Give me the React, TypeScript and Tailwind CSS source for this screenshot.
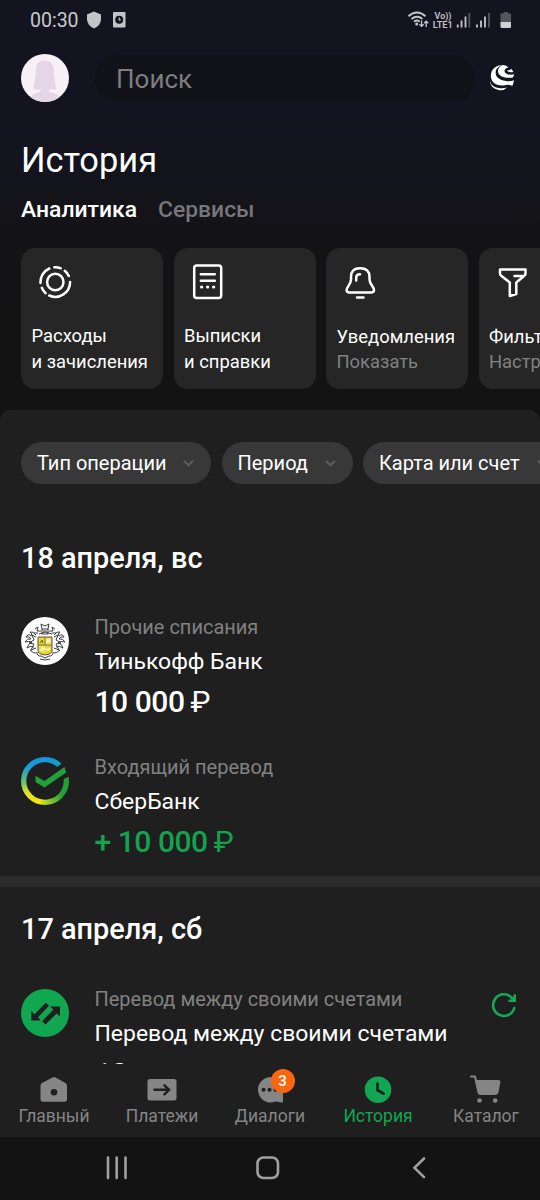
import React from "react";

const roboto = "font-[Roboto,'Noto_Sans',sans-serif]";

function StatusBar() {
  return (
    <div className="flex h-10 shrink-0 items-center pl-[30px] text-[#c9c9cd]">
      <span className="w-[56px] pt-[2px] text-[19.5px] leading-[38px]">00:30</span>
      <svg width="42" height="20" viewBox="0 0 42 20" className="shrink-0">
        <path d="M8 1.5 15 4.5V9.5Q14.6 15.500 8 18.500Q1.400 15.500 1 9.500V4.500Z" fill="#c4c4c8" />
        <rect x="27" y="2" width="12.500" height="15.500" rx="1" fill="#c4c4c8" />
        <circle cx="33.200" cy="9.800" r="4" fill="#14141c" />
        <path d="M33.200 7.500V10H35" stroke="#c4c4c8" strokeWidth="1.200" fill="none" />
      </svg>
      <div className="grow" />
      <svg width="132" height="30" viewBox="400 5 132 30" className="mr-[8px] shrink-0" fill="none" stroke="#c4c4c8">
        <path d="M408.500 16.200Q417 9 425.500 16.200M411.500 19Q417 14.500 422.500 19M414 21.700Q417 19.500 419.700 21.700" strokeWidth="1.900" />
        <circle cx="416.700" cy="24" r="1.500" fill="#c4c4c8" stroke="none" />
        <path d="M421.600 20.500V26M419.400 24.200 421.600 26.400 423.700 24.200M426.200 27V21.500M424.100 23.300 426.200 21.200 428.300 23.300" strokeWidth="1.300" />
        <text x="434.500" y="18.700" fontSize="9" fontWeight="600" textLength="17" lengthAdjust="spacingAndGlyphs" fill="#c4c4c8" stroke="none">Vo))</text>
        <text x="432.800" y="27.500" fontSize="9.800" fontWeight="600" textLength="20" lengthAdjust="spacingAndGlyphs" fill="#c4c4c8" stroke="none">LTE1</text>
        <path d="M457.700 27.500V24.500M461.500 27.500V20.500M465.500 27.500V16.500M477 27.500V24.500M481 27.500V20.500M485 27.500V16.500" strokeWidth="1.800" />
        <path d="M469.300 27.500V13M489 27.500V13" strokeWidth="1.800" stroke="#55555c" />
        <path d="M500.500 13.500H503.500V12H508V13.500H511V22H500.500Z" fill="#55555c" stroke="none" />
        <path d="M500.500 22H511V26.500Q511 28 509.500 28H502Q500.500 28 500.500 26.500Z" fill="#d0d0d3" stroke="none" />
      </svg>
    </div>
  );
}

function Header() {
  return (
    <div className="mt-[14px] flex h-12 shrink-0 items-center pl-[21px]">
      <svg width="48" height="48" viewBox="0 0 48 48" className="shrink-0">
        <clipPath id="avatar"><circle cx="24" cy="24" r="24" /></clipPath>
        <circle cx="24" cy="24" r="24" fill="#f7f0f7" />
        <path clipPath="url(#avatar)" d="M23.500 6.500C29 6.500 32 9.500 32.500 14C33 20 32.700 25 35 33Q35.500 36 32 35.500L28 35.500V37Q28 38 31 38.500Q36 39.500 39 43V48H9V43Q12 39.500 17 38.500Q19.500 38 19.500 37V35.500H15Q11.800 36 12.500 32.500C14.700 25 14.500 20 15 14C15.500 9.500 18.500 6.500 23.500 6.500Z" fill="#e6d5e8" />
      </svg>
      <div className="ml-[26px] flex h-[47px] w-[380px] items-center rounded-full bg-[#111118] pt-[2px] pl-[21px] text-[26px] text-[#7d7d82]">
        Поиск
      </div>
      <svg width="28" height="28" viewBox="488 64 28 28" className="ml-[13px] shrink-0">
        <path d="M500 65.200C493.500 66.500 490.200 71.500 491 77.500C492 83.500 498 86.500 505 85.200Q509 84.200 512.200 86C513.500 83.500 513.800 82 513.800 80.300Q510 81.800 506 81C498 80 494.500 75.500 496 70.500Q497 67 502 65Z" fill="#fff" />
        <path d="M502.500 65.100Q497.500 67.500 498 72C499 77 506 78.500 513 77.500L514.200 74.300Q510 75.500 506.500 73.700Q503.500 72 505 69.500Q505.500 68 508.500 67.500Q505.500 65 502.500 65.100Z" fill="#fff" />
        <path d="M507 70Q507.500 73 513.500 72Q512.500 70 511 68.800Q510 71 507 70Z" fill="#fff" />
        <path d="M489.700 80.500Q491.500 87.800 500 88.200Q504 88.500 507 87.500Q504 91 498.500 90Q490.500 88.500 489.700 80.500Z" fill="#fff" />
      </svg>
    </div>
  );
}

const ringIcon = (
  <svg width="36" height="36" viewBox="0 0 36 36" fill="none" stroke="#fff" strokeWidth="2.500" strokeLinecap="round">
    <circle cx="18.300" cy="18" r="8.200" />
    <path d="M3.500 19A14.800 14.800 0 0 1 12.300 4.500M17.300 3.200A14.800 14.800 0 0 1 23.800 4.300M27.800 6.700A14.800 14.800 0 0 1 31.800 12M33.100 18A14.800 14.800 0 0 1 12.300 31.500M8.600 29.200A14.800 14.800 0 0 1 4.800 23.800" />
  </svg>
);
const docIcon = (
  <svg width="36" height="36" viewBox="0 0 36 36" fill="none" stroke="#fff" strokeWidth="2.500" strokeLinecap="round">
    <rect x="4.200" y="1.500" width="27" height="32.500" rx="2.500" />
    <path d="M10.800 10.200H24.800M10.800 16.700H24.800" />
    <path d="M11.600 23H11.700M17.600 23H17.700M23.600 23H23.700" strokeWidth="3.200" />
  </svg>
);
const bellIcon = (
  <svg width="36" height="36" viewBox="0 0 36 36" fill="none" stroke="#fff" strokeWidth="2.500" strokeLinecap="round" strokeLinejoin="round">
    <path d="M9 13C9 7 12 4.300 18 4.300S27.500 7 27.500 13V15.500C27.500 20 32 23 32 26Q32 28.500 29 28.500H7.300Q4.600 28.500 4.600 26C4.600 23 9 20 9 15.500ZM14.200 16.500V14Q14.200 10.300 18 10.300M15 33.500H21.500" />
  </svg>
);
const filterIcon = (
  <svg width="36" height="36" viewBox="0 0 36 36" fill="none" stroke="#fff" strokeWidth="2.500" strokeLinecap="round" strokeLinejoin="round">
    <path d="M5 5.500H30.500V9.500Q30.500 11 29 12L21.300 18.500V30L14.800 32V18.500L6.500 12Q5 11 5 9.500ZM19.500 12H28" />
  </svg>
);

function Card({ icon, a, b, muted = false }: { icon: React.ReactNode; a: string; b: string; muted?: boolean }) {
  return (
    <div className="flex h-[141.5px] w-[142px] shrink-0 flex-col rounded-[14px] bg-[#262626] pt-[16px] pl-[10.5px]">
      <div className="ml-[5.5px] h-9 w-9">{icon}</div>
      <div className={muted ? "mt-[24px] text-[18.4px] leading-[25px] whitespace-nowrap" : "mt-[23.500px] text-[18.4px] leading-[26px] whitespace-nowrap"}>
        <div>{a}</div>
        <div className={muted ? "text-[#818181]" : ""}>{b}</div>
      </div>
    </div>
  );
}

function Chip({ label, width }: { label: string; width: string }) {
  return (
    <div className={`flex h-[42px] shrink-0 items-center justify-between rounded-full bg-[#383838] pr-[16px] pl-[16px] text-[20px] whitespace-nowrap ${width}`}>
      {label}
      <svg width="13" height="10" viewBox="0 0 13 10" fill="none" stroke="#5c5c5c" strokeWidth="2">
        <path d="M2 2.800 6.500 7.300 11 2.800" />
      </svg>
    </div>
  );
}

function Crest() {
  return (
    <svg width="48" height="48" viewBox="0 0 48 48" fill="none">
      <circle cx="24" cy="24" r="24" fill="#fff" />
      <g stroke="#3c3d42" strokeWidth="1">
        <path d="M20 7 24 9 28 7 27 12H21ZM21 12V17H27V12M22 14H26M18 17 24 15 31 17M15 18Q12 14 9 15 12 17 10 19 7 16 5 20 9 19 10 22 6 21 4 25 8 24 11 25 7 27 6 31 10 28 13 30M33 18Q36 14 39 15 36 17 38 19 41 16 43 20 39 19 38 22 42 21 44 25 40 24 37 25 41 27 42 31 38 28 35 30" />
        <path d="M15 20 11 18 13 23 8 26 13 27 10 33 15 31M33 20 37 18 35 23 40 26 35 27 38 33 33 31M14 12 17 10 16 14 20 14M34 12 31 10 32 14 28 14M13 16H17M35 16H31M9 33Q12 37 17 36M39 33Q36 37 31 36" />
        <path d="M16 37Q18 40 20 39L24 41 28 39Q30 40 32 37M19 42Q24 44 29 42" />
      </g>
      <path d="M17 20H31V34Q31 37 24 38Q17 37 17 34Z" fill="#e8d52e" stroke="#555348" strokeWidth="1" />
      <path d="M24 21H30V28H24ZM18 29H24V36L18 34Z" fill="#f0e160" />
      <path d="M17 28H31M24 20V28" stroke="#68603b" strokeWidth="0.800" />
      <path d="M20 34 22 31 27 33 29 31M25.500 26 27 23 29 25" stroke="#fff" strokeWidth="1.400" />
      <path d="M19 26 21 23 22 26" stroke="#68603b" strokeWidth="1" />
    </svg>
  );
}

function SberLogo() {
  return (
    <div className="relative h-12 w-12">
      <div className="h-12 w-12 rounded-full bg-[conic-gradient(from_0deg,#1696df_0deg,#159bc9_35deg,#21a038_70deg,#21a038_130deg,#78bd32_160deg,#eee80b_195deg,#e7e520_235deg,#63bd78_270deg,#169bd9_310deg,#1696df_360deg)]" />
      <svg className="absolute inset-0" width="48" height="48" viewBox="0 0 48 48">
        <circle cx="24" cy="24" r="18.700" fill="#1f1f1f" />
        <path d="M31 14 40 7 49 3V19L43 22 38 25Z" fill="#1f1f1f" />
        <path d="M14.500 18.800 23.500 24 43.500 10 45.200 15.500 23.500 30.500 14.500 25Z" fill="#21a038" />
      </svg>
    </div>
  );
}

function TransferIcon() {
  return (
    <svg width="48" height="48" viewBox="0 0 48 48">
      <circle cx="24" cy="24" r="24" fill="#11a650" />
      <path d="M24.800 13.800 28 16.800 17 28.200 19.800 31.500H10.300V22L13.500 25.200Z" fill="#1f1f1f" />
      <path d="M29 17.500H39V27.500L35.600 24.600 24.500 35.500 21 32.300 32.300 20.700Z" fill="#1f1f1f" />
    </svg>
  );
}

function Operation({ icon, label, name, amount, currency = "₽", green = false }: { icon: React.ReactNode; label: string; name: string; amount: string; currency?: string; green?: boolean }) {
  return (
    <div className="flex h-[140px] shrink-0 pl-[21px]">
      <div className="h-12 w-12 shrink-0">{icon}</div>
      <div className="ml-[25.500px] whitespace-nowrap">
        <div className="-mt-[3px] h-[26px] text-[20px] leading-[26px] text-[#818181]">{label}</div>
        <div className="mt-[6px] h-[32px] text-[22.950px] leading-[32px]">{name}</div>
        <div className={green ? "mt-[4px] text-[30px] leading-[40px] font-medium tracking-[-0.45px] text-[#14a150]" : "mt-[4px] text-[30px] leading-[40px] font-medium tracking-[-0.45px]"}>
          {amount} <span className="-ml-[1px] font-normal">{currency}</span>
        </div>
      </div>
    </div>
  );
}

function Tab({ label, icon, active = false }: { label: string; icon: React.ReactNode; active?: boolean }) {
  return (
    <div className={`flex w-[108px] flex-col items-center ${active ? "text-[#12a552]" : "text-[#858585]"}`}>
      <div className="mt-[8px] h-[34px] w-9">{icon}</div>
      <span className="text-[17.500px] leading-[20px]">{label}</span>
    </div>
  );
}

function BottomBar() {
  return (
    <div className="flex h-[73px] shrink-0 bg-[#1f1f1f]">
      <Tab label="Главный" icon={<svg width="36" height="34" viewBox="0 0 36 34"><path d="M16.500 5.500Q18 4.500 19.500 5.500L29.500 11Q31 12 31 14V27.500Q31 29.800 28.700 29.800H7Q4.500 29.800 4.500 27.500V14Q4.500 12 6 11Z" fill="#858585" /><circle cx="18" cy="20.200" r="3.300" fill="#1f1f1f" /></svg>} />
      <Tab label="Платежи" icon={<svg width="36" height="34" viewBox="0 0 36 34"><rect x="3.500" y="7" width="29" height="21.500" rx="2.500" fill="#858585" /><path d="M10.500 17.800H25M20.500 13.300 25 17.800 20.500 22.300" fill="none" stroke="#1f1f1f" strokeWidth="2.500" strokeLinecap="round" /></svg>} />
      <Tab label="Диалоги" icon={
        <div className="relative">
          <svg width="36" height="34" viewBox="0 0 36 34"><path d="M18 5A13.200 12.800 0 0 0 18 30.500Q21 30.500 23.500 29.500L30 30.500Q31.300 30.500 31 29V17.500A13.200 12.800 0 0 0 18 5Z" fill="#858585" /><circle cx="11.500" cy="17.800" r="2" fill="#1f1f1f" /><circle cx="17.500" cy="17.800" r="2" fill="#1f1f1f" /><circle cx="23.500" cy="17.800" r="2" fill="#1f1f1f" /></svg>
          <span className="absolute -top-[3.500px] left-[18.500px] flex h-[24px] w-[24px] items-center justify-center rounded-full bg-[#fa660d] pt-[1px] text-[15px] font-medium text-white">3</span>
        </div>
      } />
      <Tab active label="История" icon={<svg width="36" height="34" viewBox="0 0 36 34"><circle cx="18" cy="17.700" r="13.300" fill="#12a552" /><path d="M17.500 11.500V18.300L23.500 21.500" fill="none" stroke="#1f1f1f" strokeWidth="2.700" strokeLinecap="round" /></svg>} />
      <Tab label="Каталог" icon={<svg width="36" height="34" viewBox="0 0 36 34"><path d="M3 4.500H7L11 20.500" fill="none" stroke="#858585" strokeWidth="2" strokeLinecap="round" /><path d="M6.800 8H30.500Q32.800 8 32.300 10.500L30.500 20Q30 23 27 23H12.500Q10 23 9.500 20.500Z" fill="#858585" /><circle cx="11.500" cy="28.500" r="2.300" fill="#858585" /><circle cx="27.200" cy="28.500" r="2.300" fill="#858585" /></svg>} />
    </div>
  );
}

function SystemNav() {
  return (
    <div className="h-[63px] shrink-0 bg-[#131313]">
      <svg width="540" height="63" viewBox="0 0 540 63" fill="none" stroke="#a0a0a0" strokeWidth="2.600">
        <path d="M108 20.500V41M116.700 20.500V41M125.500 20.500V41" strokeLinecap="round" />
        <rect x="257.500" y="20.500" width="20.500" height="20.500" rx="6" />
        <path d="M424 21.500 414.500 30.800 424 40.200" strokeLinecap="round" />
      </svg>
    </div>
  );
}

export default function App() {
  return (
    <div className={`flex h-[1200px] w-[540px] flex-col overflow-hidden bg-[#131313] text-white ${roboto}`}>
      <div className="flex h-[410px] shrink-0 flex-col bg-[linear-gradient(#141420_0px,#141420_130px,#131317_230px,#131313_330px)]">
        <StatusBar />
        <Header />
        <h1 className="mt-[38px] h-10 shrink-0 pl-[21px] text-[34.400px] leading-10">История</h1>
        <div className="mt-[15px] flex h-[30px] shrink-0 pl-[21px] text-[22.900px] leading-[30px] font-medium">
          <span className="w-[137px]">Аналитика</span>
          <span className="text-[#77777b]">Сервисы</span>
        </div>
        <div className="mt-[22.500px] flex gap-[10.500px] overflow-hidden pl-[21px]">
          <Card icon={ringIcon} a="Расходы" b="и зачисления" />
          <Card icon={docIcon} a="Выписки" b="и справки" />
          <Card icon={bellIcon} a="Уведомления" b="Показать" muted />
          <Card icon={filterIcon} a="Фильтры" b="Настроить" muted />
        </div>
      </div>
      <div className="flex h-[654px] shrink-0 flex-col overflow-hidden rounded-t-[11px] bg-[#1f1f1f]">
        <div className="mt-[32px] flex h-[42px] shrink-0 gap-[10.500px] overflow-hidden pl-[21px]">
          <Chip label="Тип операции" width="w-[190px]" />
          <Chip label="Период" width="w-[131px]" />
          <Chip label="Карта или счет" width="w-[202px]" />
        </div>
        <h2 className="mt-[53.500px] h-10 shrink-0 pl-[21px] text-[28.900px] leading-10 font-medium">18 апреля, вс</h2>
        <div className="mt-[39.500px] h-[259px] shrink-0">
          <Operation icon={<Crest />} label="Прочие списания" name="Тинькофф Банк" amount="10 000" />
          <Operation icon={<SberLogo />} label="Входящий перевод" name="СберБанк" amount="+ 10 000" green />
        </div>
        <div className="h-[11px] shrink-0 bg-[#2b2b2b]" />
        <h2 className="mt-[22px] h-10 shrink-0 pl-[21px] text-[28.900px] leading-10 font-medium">17 апреля, сб</h2>
        <div className="mt-[39.500px] flex shrink-0">
          <Operation icon={<TransferIcon />} label="Перевод между своими счетами" name="Перевод между своими счетами" amount="10" currency="" />
          <svg width="28" height="28" viewBox="489 991 28 28" className="mt-[2px] ml-[42px] shrink-0" fill="none" stroke="#14a858" strokeWidth="2.600" strokeLinecap="round">
            <path d="M513.300 1008A10.800 10.800 0 1 1 511.200 998.200L513.700 1000.800M513.700 995.500V1000.800H508.500" />
          </svg>
        </div>
      </div>
      <BottomBar />
      <SystemNav />
    </div>
  );
}
